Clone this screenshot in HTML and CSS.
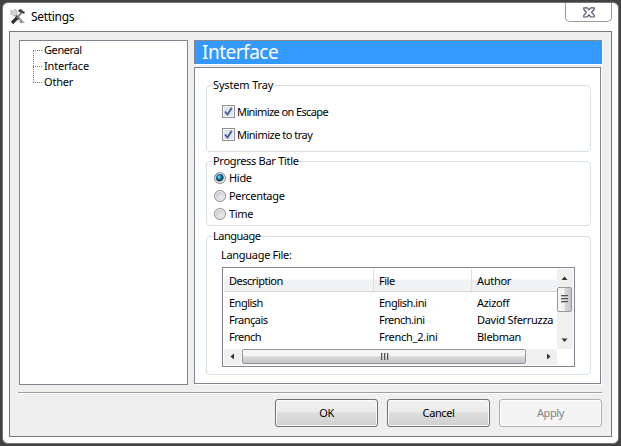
FILE: index.html
```html
<!DOCTYPE html>
<html lang="en">
<head>
<meta charset="utf-8">
<title>Settings</title>
<link rel="stylesheet" href="styles.css">
</head>
<body>
<div class="window">
  <header class="titlebar">
    <svg class="app-icon" width="16" height="17" viewBox="0 0 16 17">
      <path d="M4.5 6 L12.5 14.5" stroke="#b9b9b9" stroke-width="3.4"/>
      <path d="M1 2 L3 4 L5 1 L7 3 L7 6 L4 8 L1 6Z" fill="#d6d6d6" stroke="#aaa" stroke-width=".7"/>
      <path d="M10 14 L14.5 14.5 M6 7 L12 14" stroke="#777" stroke-width=".8"/>
      <path d="M2 15 L8 9" stroke="#303030" stroke-width="3.2"/>
      <path d="M7 10 L12 4" stroke="#777" stroke-width="1.8"/>
      <path d="M8 2 L11 1 L13 3 L15 4 L14 6 L12 5 L9 4Z" fill="#3d4144"/>
    </svg>
    <span class="title">Settings</span>
    <div class="close">
      <svg width="12" height="11" viewBox="0 0 12 11"><path d="M.8 .8H4.3L6 2.8L7.7 .8H11.2V2.4L8.6 5.3L11.2 8.4V10H7.7L6 7.9L4.3 10H.8V8.4L3.4 5.3L.8 2.4Z" fill="#fff" stroke="#50556a" stroke-width="1.2"/></svg>
    </div>
  </header>
  <main class="client">
    <div class="columns">
      <nav class="tree">
        <div class="node"><span class="t-general">General</span></div>
        <div class="node"><span>Interface</span></div>
        <div class="node last"><span>Other</span></div>
      </nav>
      <section class="page">
        <h1 class="banner"><span>Interface</span></h1>
        <div class="panel">
          <div class="group tray">
            <div class="legend"><span class="t-tray">System Tray</span></div>
            <label class="check"><i class="box"><svg width="9" height="9" viewBox="0 0 9 9"><path d="M1 4.5L3.5 7.5L7.8 .8" fill="none" stroke="#4a5f97" stroke-width="1.9"/></svg></i><span class="t-esc">Minimize on Escape</span></label>
            <label class="check"><i class="box"><svg width="9" height="9" viewBox="0 0 9 9"><path d="M1 4.5L3.5 7.5L7.8 .8" fill="none" stroke="#4a5f97" stroke-width="1.9"/></svg></i><span class="t-min">Minimize to tray</span></label>
          </div>
          <div class="group progress">
            <div class="legend"><span class="t-prog">Progress Bar Title</span></div>
            <label class="radio"><i class="dot on"></i><span class="t-perc">Hide</span></label>
            <label class="radio"><i class="dot"></i><span class="t-perc">Percentage</span></label>
            <label class="radio"><i class="dot"></i><span class="t-perc">Time</span></label>
          </div>
          <div class="group language">
            <div class="legend"><span class="t-lang">Language</span></div>
            <div class="caption"><span class="t-file">Language File:</span></div>
            <div class="list">
              <div class="rows">
                <div class="row head"><span>Description</span><span>File</span><span>Author</span></div>
                <div class="row"><span>English</span><span>English.ini</span><span>Azizoff</span></div>
                <div class="row"><span>Français</span><span>French.ini</span><span>David Sferruzza</span></div>
                <div class="row"><span>French</span><span class="t-second">French_2.ini</span><span>Blebman</span></div>
              </div>
              <div class="vscroll">
                <svg width="15" height="18"><path d="M4.5 11L7.5 7.5L10.5 11Z" fill="#333"/></svg>
                <div class="vthumb"><i></i><i></i><i></i></div>
                <svg class="down" width="15" height="18"><path d="M4.5 7.5H10.5L7.5 11Z" fill="#333"/></svg>
              </div>
              <div class="hscroll">
                <svg width="18" height="15"><path d="M10 4.5L6.5 7.5L10 10.5Z" fill="#333"/></svg>
                <div class="hthumb"><i></i><i></i><i></i></div>
                <svg class="right" width="18" height="15"><path d="M8 4.5L11.5 7.5L8 10.5Z" fill="#333"/></svg>
              </div>
              <div class="corner"></div>
            </div>
          </div>
        </div>
      </section>
    </div>
    <footer class="buttons">
      <button>OK</button>
      <button>Cancel</button>
      <button disabled>Apply</button>
    </footer>
  </main>
</div>
</body>
</html>
```
FILE: styles.css
```css
* { box-sizing: border-box; }
body {
  margin: 0;
  width: 621px;
  height: 446px;
  overflow: hidden;
  padding: 2px;
  background: #434143;
  font: 11px/16px "Noto Sans", "DejaVu Sans", sans-serif;
  color: #000;
  white-space: nowrap;
}
.window {
  height: 442px;
  padding: 0 6px;
  border: 1px solid #777;
  border-radius: 6px;
  background: #fff;
}
.titlebar { display: flex; height: 28px; }
.app-icon { margin: 5px 5px 0 1px; }
.title { flex: 1; font-size: 12px; line-height: 27px; letter-spacing: -.3px; }
.close {
  width: 47px;
  height: 19px;
  display: flex;
  justify-content: center;
  padding-top: 4px;
  border: 1px solid #999;
  border-top: 0;
  border-radius: 0 0 5px 5px;
}
.client {
  height: 406px;
  border: 1px solid #777779;
  background: #efefef;
  padding: 8px 9px 0 8px;
}
.columns {
  display: flex;
  height: 353px;
  padding-left: 1px;
  border-bottom: 1px solid #a0a0a0;
  box-shadow: 0 1px #fff;
}
.tree {
  width: 169px;
  height: 345px;
  margin-right: 6px;
  padding: 1px 0 0 13px;
  background: #fff;
  border: 1px solid #82858f;
  letter-spacing: -.2px;
}
.t-general { letter-spacing: -.4px; }
.node { height: 16px; padding-left: 11px; position: relative; }
.node::before, .node::after { content: ""; position: absolute; left: 0; }
.node::before { top: 8px; width: 9px; border-top: 1px dotted #808080; }
.node::after { top: 8px; height: 16px; border-left: 1px dotted #808080; }
.node.last::after { display: none; }
.page { width: 408px; }
.banner {
  margin: 0 0 3px;
  height: 24px;
  padding-left: 7px;
  background: #3399ff;
  border: 1px solid #858993;
  border-width: 1px 0 0 1px;
  box-shadow: 0 1px #fff, 1px 0 #fff;
  color: #fff;
  font-size: 19px;
  font-weight: 400;
  line-height: 23px;
  letter-spacing: -.5px;
}
.panel {
  width: 407px;
  height: 317px;
  padding: 17px 9px 0 11px;
  background: #fff;
  border: 1px solid #82858f;
  box-shadow: 1px 1px #fff;
}
.group { width: 385px; border: 1px solid #d5dfe5; border-radius: 4px; }
.tray { height: 67px; margin-bottom: 9px; }
.progress { height: 65px; margin-bottom: 10px; }
.language { height: 139px; }
.legend { height: 16px; margin: -9px 0 0 6px; }
.legend span { display: inline-block; background: #fff; height: 16px; }
.t-tray { letter-spacing: -.15px; }
.t-esc { letter-spacing: -.6px; }
.t-min { letter-spacing: -.5px; }
.t-prog, .t-perc, .t-file { letter-spacing: -.3px; }
.t-lang { letter-spacing: -.5px; }
.check, .radio { display: flex; align-items: center; }
.check { height: 23px; margin-left: 15px; }
.legend + .check { margin-top: 7px; }
.box {
  width: 13px;
  height: 13px;
  margin-right: 2px;
  border: 1px solid #8e8f8f;
  background: #dfe3ea;
  box-shadow: inset 0 0 0 1px #f5f5f5;
  padding: 1px;
}
.box svg { display: block; }
.radio { height: 18px; padding-left: 7px; }
.dot {
  width: 12px;
  height: 12px;
  margin-right: 3px;
  border: 1px solid #8e8f8f;
  border-radius: 50%;
  background: radial-gradient(circle at 60% 60%, #eee, #c9cdd3 60%);
  box-shadow: inset 0 0 0 1px #f6f6f6;
}
.dot.on { background: radial-gradient(circle at 42% 40%, #8de4ff, #137fae 25%, #0b3858 45%, #dce3e8 62%); }
.caption { height: 23px; padding: 3px 0 0 14px; }
.list {
  margin-left: 15px;
  width: 353px;
  height: 100px;
  padding: 1px;
  border: 1px solid #82858f;
  display: grid;
  grid-template: 80px 16px / 333px 16px;
}
.row { display: grid; grid-template-columns: 150px 98px 85px; height: 17px; line-height: 17px; letter-spacing: -.5px; }
.row span { padding-left: 5px; }
.row span:nth-child(3) { letter-spacing: -.3px; }
.row .t-second { letter-spacing: -.25px; }
.head { height: 23px; line-height: 24px; margin-bottom: 2px; background: linear-gradient(#fff 45%, #f1f2f4 50%, #f1f2f4); border-bottom: 1px solid #d5d5d5; }
.head span { border-right: 1px solid #dedfe1; }
.head span:last-child { border-right: 0; }
.vscroll { display: flex; flex-direction: column; background: #f0f0f0; }
.vthumb { width: 15px; height: 25px; border: 1px solid #999; border-radius: 2px; background: linear-gradient(90deg, #f5f5f5 48%, #d8d8da 52%, #c5c5c8); padding: 7px 0 0 3px; }
.vthumb i { display: block; width: 7px; height: 1px; margin-bottom: 2px; background: #555; box-shadow: 0 1px #bbb; }
.down { margin-top: auto; }
.hscroll { display: flex; background: #f0f0f0; }
.hthumb { width: 284px; height: 15px; border: 1px solid #999; border-radius: 2px; background: linear-gradient(#f5f5f5 45%, #d8d8da 52%, #c5c5c8); display: flex; justify-content: center; padding-top: 3px; }
.hthumb i { width: 1px; height: 7px; margin: 0 1px; background: #555; box-shadow: 1px 0 #bbb; }
.right { margin-left: auto; }
.corner { background: #fff; }
.buttons { display: flex; justify-content: flex-end; gap: 9px; padding-top: 6px; }
button {
  width: 103px;
  height: 28px;
  padding: 0;
  font: inherit;
  letter-spacing: -.4px;
  color: #000;
  border: 1px solid #707070;
  border-radius: 3px;
  background: linear-gradient(#f2f2f2, #ebebeb 45%, #dddddd 50%, #cfcfcf);
  box-shadow: inset 0 0 0 1px #fbfbfb;
}
button:disabled { color: #838383; border-color: #adb2b5; background: #f4f4f4; }
```
